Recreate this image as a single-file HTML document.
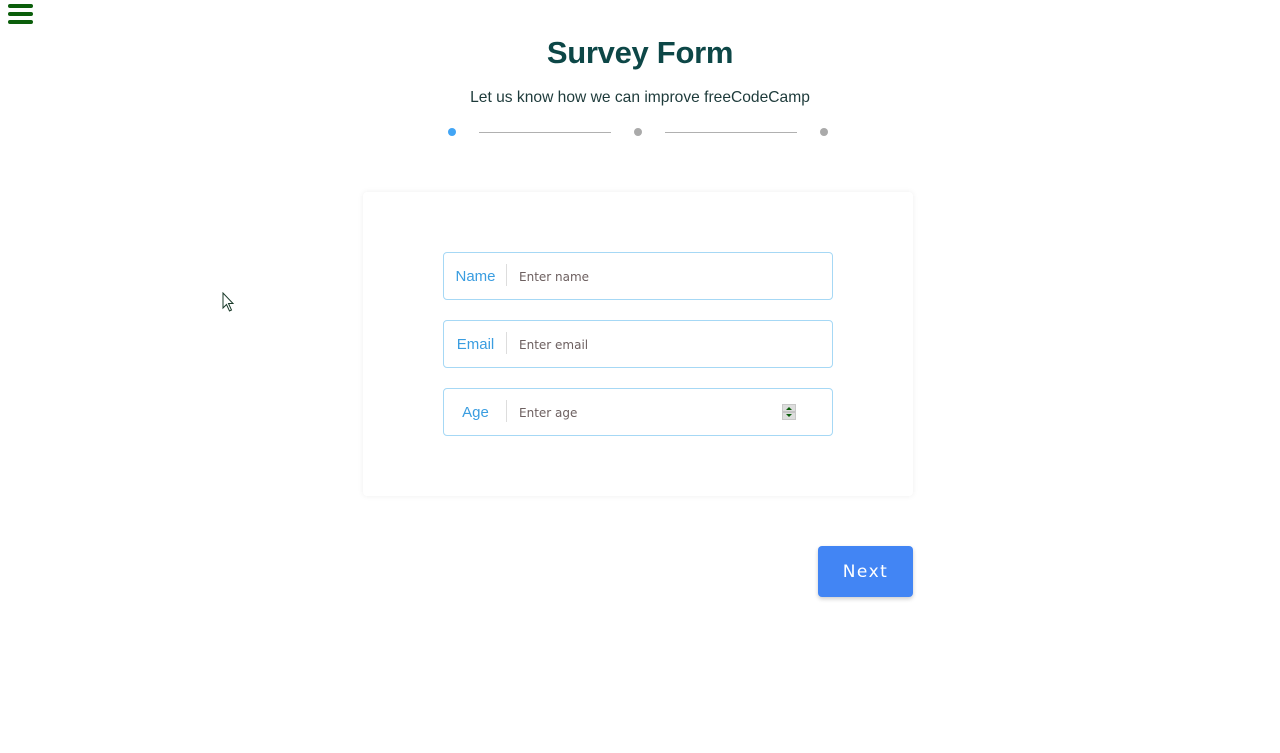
<!DOCTYPE html>
<html><head><meta charset="utf-8"><style>
*{box-sizing:border-box;margin:0;padding:0}
body{width:1280px;height:753px;background:#fff;font-family:"Liberation Sans",sans-serif;position:relative;overflow:hidden}
.burger{position:absolute;left:8px;top:4px;width:25px}
.burger span{display:block;height:4px;background:#0b5e0b;border-radius:2px;margin-bottom:4px}
h1{position:absolute;top:35px;width:100%;text-align:center;font-size:31px;color:#0d4747;font-weight:bold;letter-spacing:-0.3px}
.sub{position:absolute;top:89px;width:100%;text-align:center;font-size:15.6px;color:#1d3a3a}
.dot{position:absolute;top:128px;width:8px;height:8px;border-radius:50%;background:#aaa}
.line{position:absolute;top:132px;height:1px;width:132px;background:#b0b0b0}
.card{position:absolute;left:363px;top:192px;width:550px;height:304px;background:#fff;border-radius:4px;box-shadow:0 0 6px rgba(0,0,0,0.07)}
.field{position:absolute;left:443px;width:390px;height:48px;border:1px solid #a6d8f5;border-radius:4px}
.field .lab{position:absolute;left:0;width:63px;top:1px;line-height:46px;text-align:center;color:#3a9de0;font-size:15px}
.field .sep{position:absolute;left:62px;top:11px;height:22px;width:1px;background:#ddd}
.field .ph{position:absolute;left:75px;top:1px;line-height:46px;color:#6d6060;font-size:12px;font-family:"DejaVu Sans",sans-serif}
.spin{position:absolute;left:338px;top:15px;width:14px;height:16px;background:#ddd;border:1px solid #c8c8c8}
.btn{position:absolute;left:818px;top:546px;width:95px;height:51px;background:#4285f4;border-radius:4px;color:#fff;font-size:17px;text-align:center;line-height:53px;letter-spacing:1.5px;box-shadow:0 2px 4px rgba(0,0,0,0.2);font-family:"DejaVu Sans",sans-serif}
</style></head><body>
<div class="burger"><span></span><span></span><span></span></div>
<h1>Survey Form</h1>
<div class="sub">Let us know how we can improve freeCodeCamp</div>
<div class="dot" style="left:448px;background:#42a5f5"></div>
<div class="line" style="left:479px"></div>
<div class="dot" style="left:634px"></div>
<div class="line" style="left:665px"></div>
<div class="dot" style="left:820px"></div>
<div class="card"></div>
<div class="field" style="top:252px"><div class="lab">Name</div><div class="sep"></div><div class="ph">Enter name</div></div>
<div class="field" style="top:320px"><div class="lab">Email</div><div class="sep"></div><div class="ph">Enter email</div></div>
<div class="field" style="top:388px"><div class="lab">Age</div><div class="sep"></div><div class="ph">Enter age</div>
<div class="spin"><svg width="12" height="14" style="position:absolute;left:0;top:0"><path d="M3 5L6 2L9 5Z" fill="#0b5e0b"/><line x1="0" y1="7" x2="12" y2="7" stroke="#aaa"/><path d="M3 9L6 12L9 9Z" fill="#0b5e0b"/></svg></div></div>
<div class="btn">Next</div>
<svg style="position:absolute;left:222px;top:292px" width="14" height="22"><path d="M1 1L1 16L4.5 12.5L7.5 19L9.5 18L6.5 11.5L11 11.5Z" fill="#fff" stroke="#1a3a2a" stroke-width="1"/></svg>
</body></html>
